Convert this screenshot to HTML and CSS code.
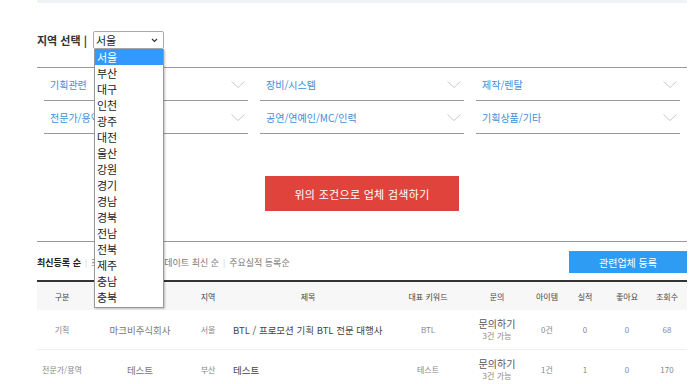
FILE: index.html
```html
<!DOCTYPE html>
<html lang="ko">
<head>
    <meta charset="UTF-8">
    <meta name="viewport" content="width=device-width, initial-scale=1.0">
    <title>업체 검색</title>
    <link rel="stylesheet" href="styles.css">
</head>
<body>
    <div class="page">
        <div class="top-band"></div>

        <!-- 지역 선택 -->
        <div class="region">
            <span class="region-label">지역 선택 |</span>
            <div class="region-select">
                <div class="select-box">
                    <span>서울</span>
                    <svg width="7" height="5" viewBox="0 0 7 5"><polyline points="1,1 3.5,3.5 6,1" fill="none" stroke="#333" stroke-width="1.2"/></svg>
                </div>
                <ul class="select-list">
                    <li class="selected">서울</li>
                    <li>부산</li>
                    <li>대구</li>
                    <li>인천</li>
                    <li>광주</li>
                    <li>대전</li>
                    <li>울산</li>
                    <li>강원</li>
                    <li>경기</li>
                    <li>경남</li>
                    <li>경북</li>
                    <li>전남</li>
                    <li>전북</li>
                    <li>제주</li>
                    <li>충남</li>
                    <li>충북</li>
                </ul>
            </div>
        </div>

        <!-- 분야 선택 -->
        <div class="category-grid">
            <div class="category-item"><span>기획관련</span><svg class="chevron" width="14" height="7" viewBox="0 0 14 7"><polyline points="0.5,0.5 7,6.5 13.5,0.5" fill="none" stroke="#c8c8c8" stroke-width="1"/></svg></div>
            <div class="category-item"><span>장비/시스템</span><svg class="chevron" width="14" height="7" viewBox="0 0 14 7"><polyline points="0.5,0.5 7,6.5 13.5,0.5" fill="none" stroke="#c8c8c8" stroke-width="1"/></svg></div>
            <div class="category-item"><span>제작/렌탈</span><svg class="chevron" width="14" height="7" viewBox="0 0 14 7"><polyline points="0.5,0.5 7,6.5 13.5,0.5" fill="none" stroke="#c8c8c8" stroke-width="1"/></svg></div>
            <div class="category-item"><span>전문가/용역</span><svg class="chevron" width="14" height="7" viewBox="0 0 14 7"><polyline points="0.5,0.5 7,6.5 13.5,0.5" fill="none" stroke="#c8c8c8" stroke-width="1"/></svg></div>
            <div class="category-item"><span>공연/연예인/MC/인력</span><svg class="chevron" width="14" height="7" viewBox="0 0 14 7"><polyline points="0.5,0.5 7,6.5 13.5,0.5" fill="none" stroke="#c8c8c8" stroke-width="1"/></svg></div>
            <div class="category-item"><span>기획상품/기타</span><svg class="chevron" width="14" height="7" viewBox="0 0 14 7"><polyline points="0.5,0.5 7,6.5 13.5,0.5" fill="none" stroke="#c8c8c8" stroke-width="1"/></svg></div>
        </div>

        <div class="search-row">
            <button class="search-btn">위의 조건으로 업체 검색하기</button>
        </div>

        <!-- 정렬 / 등록 -->
        <div class="list-bar">
            <div class="sort">
                <span class="sort-item active">최신등록 순</span>
                <span class="sort-sep">|</span>
                <span class="sort-item">조회수 높은 순</span>
                <span class="sort-sep">|</span>
                <span class="sort-item">업데이트 최신 순</span>
                <span class="sort-sep">|</span>
                <span class="sort-item">주요실적 등록순</span>
            </div>
            <button class="register-btn">관련업체 등록</button>
        </div>

        <table class="company-table">
            <colgroup>
                <col style="width:50px">
                <col style="width:106px">
                <col style="width:30px">
                <col style="width:170px">
                <col style="width:70px">
                <col style="width:68px">
                <col style="width:32px">
                <col style="width:44px">
                <col style="width:40px">
                <col style="width:40px">
            </colgroup>
            <thead>
                <tr>
                    <th>구분</th>
                    <th>업체명</th>
                    <th>지역</th>
                    <th>제목</th>
                    <th>대표 키워드</th>
                    <th>문의</th>
                    <th>아이템</th>
                    <th>실적</th>
                    <th>좋아요</th>
                    <th>조회수</th>
                </tr>
            </thead>
            <tbody>
                <tr>
                    <td>기획</td>
                    <td class="name">마크비주식회사</td>
                    <td>서울</td>
                    <td class="title">BTL / 프로모션 기획 BTL 전문 대행사</td>
                    <td>BTL</td>
                    <td class="inquiry"><span class="inq-main">문의하기</span><span class="inq-sub">3건 가능</span></td>
                    <td>0건</td>
                    <td>0</td>
                    <td>0</td>
                    <td>68</td>
                </tr>
                <tr>
                    <td>전문가/용역</td>
                    <td class="name">테스트</td>
                    <td>부산</td>
                    <td class="title">테스트</td>
                    <td>테스트</td>
                    <td class="inquiry"><span class="inq-main">문의하기</span><span class="inq-sub">3건 가능</span></td>
                    <td>1건</td>
                    <td>1</td>
                    <td>0</td>
                    <td>170</td>
                </tr>
            </tbody>
        </table>
    </div>
</body>
</html>
```

FILE: styles.css
```css
body {
    margin: 0;
    padding: 0;
    background-color: #fff;
    color: #333;
    font-family: 'Noto Sans CJK KR', 'Noto Sans', sans-serif;
    overflow: hidden;
}

.page {
    width: 650px;
    margin-left: 37px;
}

.top-band {
    height: 3px;
    background-color: #eef3f8;
}

/* 지역 선택 */
.region {
    display: flex;
    align-items: center;
    margin-top: 28px;
    margin-bottom: 18px;
    height: 18px;
}

.region-label {
    font-size: 11px;
    font-weight: bold;
    color: #333;
    margin-right: 6px;
    line-height: 18px;
}

.region-select {
    position: relative;
}

.select-box {
    width: 62px;
    height: 16px;
    border: 1px solid #a9a9a9;
    border-radius: 2px;
    display: flex;
    align-items: center;
    justify-content: space-between;
    padding: 0 5px 0 2px;
    font-size: 11px;
    line-height: 16px;
    color: #222;
}

.select-list {
    position: absolute;
    top: 18px;
    left: 1px;
    width: 68px;
    margin: 0;
    padding: 0 0 2px 0;
    list-style: none;
    background-color: #fff;
    border: 1px solid #999;
    border-top: none;
    box-shadow: 1px 1px 2px rgba(0, 0, 0, 0.25);
    z-index: 20;
}

.select-list li {
    height: 16px;
    line-height: 16px;
    padding-left: 2px;
    font-size: 11px;
    color: #222;
}

.select-list li.selected {
    background-color: #3399ff;
    color: #fff;
}

/* 분야 */
.category-grid {
    border-top: 1px solid #999;
    padding: 0 7px;
    display: grid;
    grid-template-columns: repeat(3, 1fr);
    column-gap: 12px;
}

.category-item {
    height: 32px;
    border-bottom: 1px solid #999;
    display: flex;
    align-items: center;
    justify-content: space-between;
    padding: 0 3px 0 6px;
    font-size: 10px;
    color: #3b8fd9;
}

.chevron {
    display: block;
}

/* 검색 버튼 */
.search-row {
    display: flex;
    justify-content: center;
    margin-top: 42px;
    margin-bottom: 30px;
}

.search-btn {
    width: 194px;
    height: 35px;
    border: none;
    background-color: #e0433b;
    color: #fff;
    font-family: 'Noto Sans CJK KR', sans-serif;
    font-size: 11px;
    letter-spacing: 0.3px;
    padding: 0;
}

/* 정렬 */
.list-bar {
    border-top: 1px solid #999;
    display: flex;
    justify-content: space-between;
    align-items: center;
    padding-top: 9px;
    margin-bottom: 7px;
}

.sort {
    font-size: 9px;
    color: #777;
    display: flex;
    align-items: center;
}

.sort-item.active {
    color: #222;
    font-weight: bold;
}

.sort-sep {
    color: #ccc;
    margin: 0 4px;
    font-size: 8px;
}

.register-btn {
    width: 118px;
    height: 22px;
    border: none;
    background-color: #2f9cf3;
    color: #fff;
    font-family: 'Noto Sans CJK KR', sans-serif;
    font-size: 10px;
    padding: 0;
}

/* 목록 */
.company-table {
    width: 650px;
    border-collapse: collapse;
    table-layout: fixed;
    border-top: 2px solid #333;
}

.company-table th {
    height: 28px;
    padding: 0;
    background-color: #f7f7f7;
    font-size: 8px;
    font-weight: normal;
    color: #444;
    text-align: center;
}

.company-table td {
    height: 39px;
    padding: 0;
    border-bottom: 1px solid #eee;
    font-size: 8px;
    color: #888;
    text-align: center;
    white-space: nowrap;
}

.company-table td.name {
    font-size: 9.5px;
    color: #777;
}

.company-table td.title {
    text-align: left;
    padding-left: 10px;
    font-size: 9.5px;
    color: #444;
}

.inquiry span {
    display: block;
    line-height: 12px;
}

.inq-main {
    font-size: 10px;
    color: #555;
}

.inq-sub {
    font-size: 8px;
    color: #888;
}
```
